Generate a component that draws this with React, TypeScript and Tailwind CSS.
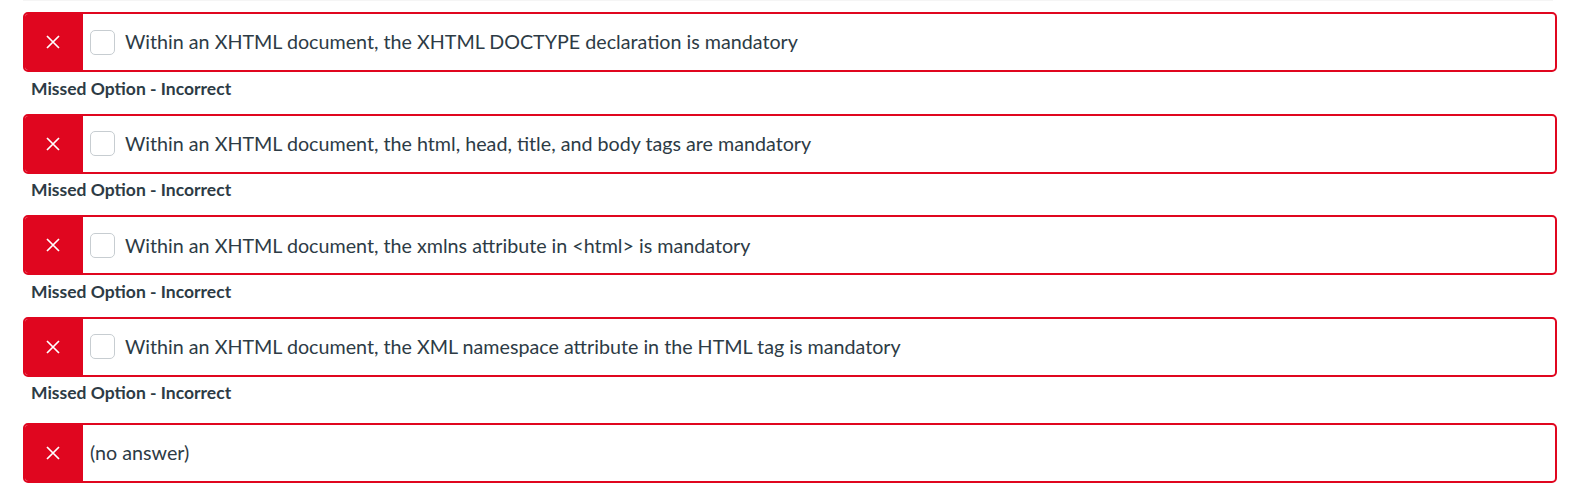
import React from "react"

const answers = [
  "Within an XHTML document, the XHTML DOCTYPE declaration is mandatory",
  "Within an XHTML document, the html, head, title, and body tags are mandatory",
  "Within an XHTML document, the xmlns attribute in <html> is mandatory",
  "Within an XHTML document, the XML namespace attribute in the HTML tag is mandatory",
]

const XIcon = () => (
  <svg width="14" height="14" viewBox="0 0 14 14" fill="none">
    <path d="M1 1 L13 13 M13 1 L1 13" stroke="white" strokeWidth="1.7" />
  </svg>
)

const AnswerRow = ({ text, checkbox }: { text: string; checkbox: boolean }) => (
  <div className="flex h-[60px] rounded-[5px] border-2 border-[#e0061f] bg-white overflow-hidden">
    <div className="w-[60px] -ml-[2px] -my-[2px] bg-[#e0061f] flex items-center justify-center shrink-0">
      <XIcon />
    </div>
    <div className="flex items-center pl-[7px]">
      {checkbox && (
        <span className="w-[25px] h-[25px] rounded-[5px] border border-[#c7cdd1] bg-white mr-[10px] shrink-0" />
      )}
      <span className="text-[19.7px] text-[#2d3b45]">{text}</span>
    </div>
  </div>
)

export default function App() {
  return (
    <div
      className="bg-white min-h-[494px] pl-[23px] pr-[19px]"
      style={{ fontFamily: "Lato, 'Noto Sans', sans-serif" }}
    >
      <div className="h-px bg-[#f5f5f5] mr-[4px]" />
      <div className="pt-[11px]">
        {answers.map((a) => (
          <div key={a}>
            <AnswerRow text={a} checkbox />
            <div className="h-[41.67px] pt-[3.5px] pl-[8px] text-[17.5px] font-bold text-[#2d3b45]">
              Missed Option - Incorrect
            </div>
          </div>
        ))}
        <div className="mt-[4.33px]">
          <AnswerRow text="(no answer)" checkbox={false} />
        </div>
      </div>
    </div>
  )
}
